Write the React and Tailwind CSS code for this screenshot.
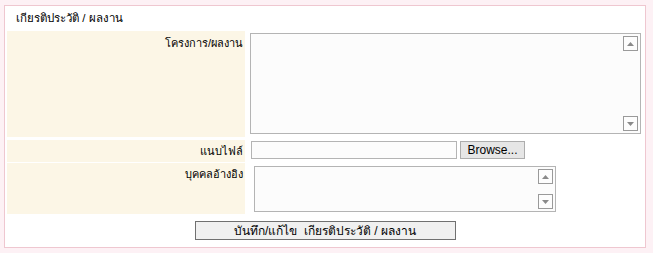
import { useState } from "react";

function ScrollArrows() {
  return (
    <div className="flex flex-col justify-between py-[2px] pr-[2px]">
      <div className="w-[15px] h-[15px] border border-[#9a9a9a] bg-[#fdfdfd] flex items-center justify-center">
        <svg width="7" height="4" viewBox="0 0 7 4">
          <path d="M3.5 0 L7 4 L0 4 Z" fill="#8a8a8a" />
        </svg>
      </div>
      <div className="w-[15px] h-[15px] border border-[#9a9a9a] bg-[#fdfdfd] flex items-center justify-center">
        <svg width="7" height="4" viewBox="0 0 7 4">
          <path d="M0 0 L7 0 L3.5 4 Z" fill="#8a8a8a" />
        </svg>
      </div>
    </div>
  );
}

function TextBox({ className, value, onChange }) {
  return (
    <div className={`flex border border-[#b4b4b4] bg-[#fcfcfc] ${className}`}>
      <textarea
        value={value}
        onChange={(e) => onChange(e.target.value)}
        className="flex-1 resize-none bg-transparent outline-none px-1 text-[13px]"
      />
      <ScrollArrows />
    </div>
  );
}

export default function App() {
  const [project, setProject] = useState("");
  const [reference, setReference] = useState("");

  return (
    <div
      className="h-[253px] w-[653px] bg-[#fdf1f5] pt-[5px] pl-[4px] text-[11px] text-black"
      style={{ fontFamily: "Tahoma, 'Liberation Sans', 'Noto Sans', sans-serif" }}
    >
      <div className="w-[642px] h-[243px] border border-[#efc7d0] bg-white px-[2px] flex flex-col">
        <div className="h-[25px] pl-[9px] flex items-center text-[11.5px]">เกียรติประวัติ / ผลงาน</div>

        <div className="flex h-[106px]">
          <div className="w-[238px] bg-[#fcf6e6] text-right pr-[2px] pt-[4px]">โครงการ/ผลงาน</div>
          <div className="pl-[5px] pt-[2px]">
            <TextBox className="w-[391px] h-[101px]" value={project} onChange={setProject} />
          </div>
        </div>

        <div className="flex h-[22px] mt-[3px]">
          <div className="w-[238px] bg-[#fcf6e6] text-right pr-[2px] flex items-center justify-end">แนบไฟล์</div>
          <div className="pl-[6px] pt-[1px] flex gap-[3px]">
            <div className="w-[206px] h-[18px] border border-[#b4b4b4] bg-[#fcfcfc]" />
            <button className="w-[65px] h-[18px] border border-[#adadad] bg-[#e6e6e6] text-[12px] leading-none">
              Browse...
            </button>
          </div>
        </div>

        <div className="flex h-[51px] mt-[1px]">
          <div className="w-[238px] bg-[#fcf6e6] text-right pr-[2px] pt-[3px]">บุคคลอ้างอิง</div>
          <div className="pl-[9px] pt-[3px]">
            <TextBox className="w-[302px] h-[46px]" value={reference} onChange={setReference} />
          </div>
        </div>

        <div className="flex-1 flex justify-center pt-[7px]">
          <button className="w-[261px] h-[19px] border border-[#707070] bg-[#f0f0f0] leading-none text-[12px]">
            บันทึก/แก้ไข&nbsp;&nbsp;เกียรติประวัติ / ผลงาน
          </button>
        </div>
      </div>
    </div>
  );
}
